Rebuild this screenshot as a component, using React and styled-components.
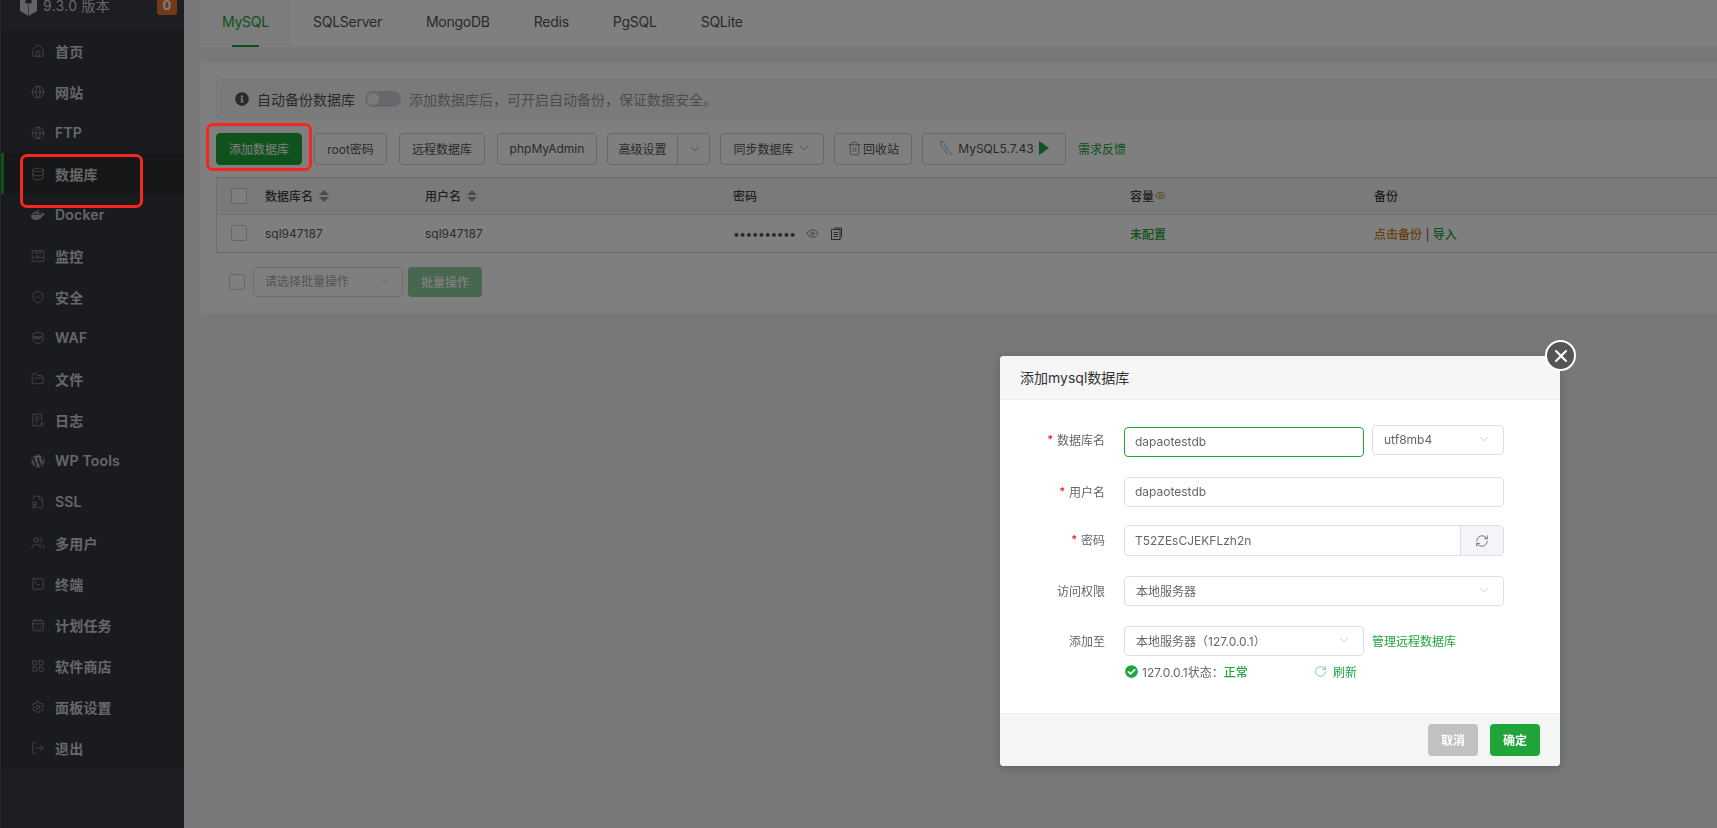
import React from 'react';
import styled, { createGlobalStyle } from 'styled-components';
import {
  Home, Globe, Database, ShieldCheck, FolderOpen, Users,
  SquareTerminal, CalendarDays, LayoutGrid, Settings, LogOut, ChevronDown, Trash2,
  Eye, RefreshCw, RotateCw, X, FileBadge,
} from 'lucide-react';
import { FaDocker, FaWordpress, FaCheckCircle, FaInfoCircle } from 'react-icons/fa';

const GREEN = '#20a53a';

const GlobalStyle = createGlobalStyle`
  html, body {
    margin: 0;
    height: 100%;
    overflow: hidden;
    font-family: Inter, "Noto Sans CJK SC", "Liberation Sans", sans-serif;
    font-size: 12px;
    color: #555;
    background: #f0f0f0;
  }
  * { box-sizing: border-box; }
`;

const Page = styled.div`
  display: flex;
  width: 100%;
  height: 828px;
  overflow: hidden;
`;

const Sidebar = styled.aside`
  width: 184px;
  flex-shrink: 0;
  background: #393c46;
  border-left: 1px solid #4b4e58;
  display: flex;
  flex-direction: column;
`;

const VersionRow = styled.div`
  height: 30px;
  display: flex;
  padding: 0 7px 0 19px;
  gap: 6px;
  color: #ccc;
  font-size: 14px;
  line-height: 12px;
`;

const Version = styled.span`
  flex: 1;
  letter-spacing: 0.3px;
`;

const Badge = styled.span`
  width: 20px;
  height: 15px;
  border-radius: 0 0 3px 3px;
  background: #e8722c;
  color: #fff;
  font-size: 13px;
  font-weight: 700;
  line-height: 11px;
  text-align: center;
`;

const Menu = styled.nav`
  background: #32373d;
`;

const NavItem = styled.a`
  height: 41px;
  display: flex;
  align-items: center;
  gap: 10px;
  padding-left: 30px;
  color: #cfcfcf;
  font-size: 14px;
  font-weight: 600;
  letter-spacing: 0.2px;
  background: ${props => (props.$active ? '#2a2e33' : 'transparent')};
  box-shadow: ${props => (props.$active ? `inset 3px 0 0 ${GREEN}` : 'none')};
  svg {
    width: 14px;
    height: 14px;
    flex-shrink: 0;
    color: #ababab;
    stroke-width: 1.1;
  }
`;

const Main = styled.main`
  flex: 1;
  min-width: 0;
  padding-left: 16px;
  display: flex;
  flex-direction: column;
  gap: 16px;
`;

const Tabs = styled.div`
  height: 47px;
  display: flex;
  background: #fff;
  border-bottom-left-radius: 4px;
`;

const Tab = styled.div`
  position: relative;
  height: 47px;
  padding: 0 22px 4px;
  display: flex;
  align-items: center;
  font-size: 14px;
  letter-spacing: -0.25px;
  color: ${props => (props.$active ? GREEN : '#555')};
  background: ${props => (props.$active ? '#f8f8f8' : 'transparent')};
  ${props => props.$active && `
    &::after {
      content: '';
      position: absolute;
      left: 32px;
      bottom: 0;
      width: 27px;
      height: 2px;
      background: ${GREEN};
    }
  `}
`;

const Card = styled.section`
  height: 250px;
  padding: 16px 0 0 16px;
  background: #fff;
  border-radius: 4px 0 0 4px;
`;

const Notice = styled.div`
  height: 41px;
  display: flex;
  align-items: center;
  padding: 0 0 1px 18px;
  background: #f5f5f5;
  border: 1px solid #eee;
  border-right: 0;
  border-radius: 4px 0 0 4px;
  font-size: 14px;
  color: #555;
  svg { color: #555; }
`;

const NoticeTitle = styled.span`
  margin-left: 8px;
`;

const Toggle = styled.span`
  position: relative;
  width: 36px;
  height: 16px;
  margin: 0 8px 0 10px;
  border-radius: 8px;
  background: #cfd1d6;
  &::after {
    content: '';
    position: absolute;
    left: 2px;
    top: 2px;
    width: 12px;
    height: 12px;
    border-radius: 50%;
    background: #f4f4f4;
  }
`;

const NoticeHint = styled.span`
  color: #999;
`;

const Toolbar = styled.div`
  display: flex;
  align-items: center;
  gap: 10px;
  margin: 13px 0 12px;
`;

const ToolGroup = styled.div`
  display: flex;
  gap: 12px;
`;

const Button = styled.button`
  width: ${props => props.$width}px;
  height: 32px;
  padding: 0 0 2px;
  display: inline-flex;
  align-items: center;
  justify-content: center;
  gap: ${props => props.$gap || 3}px;
  border: 1px solid ${props => (props.$primary ? GREEN : '#d0d0d0')};
  border-radius: 4px;
  background: ${props => (props.$primary ? GREEN : '#fff')};
  color: ${props => (props.$primary ? '#fff' : '#555')};
  font: inherit;
  font-size: 12px;
  svg { flex-shrink: 0; }
`;

const SplitButton = styled(Button)`
  padding: 0;
  justify-content: flex-start;
`;

const SplitLabel = styled.span`
  width: 73px;
  height: 100%;
  padding-bottom: 2px;
  display: flex;
  align-items: center;
  justify-content: center;
  border-right: 1px solid #d0d0d0;
`;

const SplitArrow = styled.span`
  width: 29px;
  display: flex;
  justify-content: center;
`;

const FeedbackLink = styled.a`
  margin-left: 2px;
  padding-bottom: 2px;
  color: ${GREEN};
  font-size: 12px;
`;

const Table = styled.div`
  border-top: 1px solid #ccc;
  border-left: 1px solid #ddd;
`;

const TableRow = styled.div`
  display: grid;
  grid-template-columns: 48px 160px 308px 397px 244px 1fr;
  align-items: center;
  height: ${props => (props.$head ? 37 : 38)}px;
  padding-bottom: 1px;
  border-bottom: 1px solid ${props => (props.$head ? '#e0e0e0' : '#ccc')};
  background: ${props => (props.$head ? '#f5f5f5' : '#fff')};
  font-weight: ${props => (props.$head ? 500 : 400)};
  color: ${props => (props.$head ? '#444' : '#555')};
`;

const CheckCell = styled.div`
  padding-left: 14px;
`;

const Checkbox = styled.span`
  display: block;
  width: 16px;
  height: 16px;
  border: 1px solid #ccc;
  border-radius: 2px;
  background: #fff;
`;

const HeadCell = styled.div`
  display: flex;
  align-items: center;
  gap: ${props => props.$gap ?? 6}px;
`;

const SortArrows = styled.span`
  display: inline-flex;
  flex-direction: column;
  gap: 2px;
  &::before, &::after {
    content: '';
    border-left: 5px solid transparent;
    border-right: 5px solid transparent;
  }
  &::before { border-bottom: 5px solid #999; }
  &::after { border-top: 5px solid #999; }
`;

const PasswordCell = styled.div`
  display: flex;
  align-items: center;
  color: #555;
  svg { color: #555; }
`;

const Dots = styled.span`
  width: 73px;
  font-size: 12px;
  letter-spacing: -0.5px;
`;

const CopyWrap = styled.span`
  display: flex;
  margin-left: 12px;
`;

const GreenText = styled.span`
  color: ${GREEN};
  font-weight: 500;
`;

const OrangeText = styled.span`
  color: #cb7e1f;
  font-weight: 500;
`;

const BatchRow = styled.div`
  display: flex;
  align-items: center;
  margin-top: 14px;
  padding-left: 13px;
`;

const BatchSelect = styled.div`
  width: 150px;
  height: 30px;
  margin-left: 8px;
  padding: 0 11px 3px;
  display: flex;
  align-items: center;
  justify-content: space-between;
  border: 1px solid #ddd;
  border-radius: 4px;
  color: #aaa;
`;

const BatchButton = styled.button`
  width: 74px;
  height: 30px;
  margin-left: 5px;
  padding-bottom: 3px;
  border: 0;
  border-radius: 4px;
  background: #8fd09d;
  color: #fff;
  font: inherit;
  font-weight: 500;
`;

const Overlay = styled.div`
  position: fixed;
  inset: 0;
  background: rgba(0, 0, 0, 0.5);
`;

const MenuMark = styled.div`
  position: fixed;
  left: 20px;
  top: 154px;
  width: 123px;
  height: 54px;
  border: 3px solid #f5271f;
  border-radius: 7px;
`;

const ButtonMark = styled.div`
  position: fixed;
  left: 206px;
  top: 123px;
  width: 106px;
  height: 48px;
  border: 3px solid #f5271f;
  border-radius: 7px;
`;

const Modal = styled.div`
  position: fixed;
  left: 1000px;
  top: 356px;
  width: 560px;
  height: 410px;
  display: flex;
  flex-direction: column;
  background: #fff;
  border-radius: 4px;
  box-shadow: 0 2px 10px rgba(0, 0, 0, 0.2);
`;

const CloseButton = styled.span`
  position: absolute;
  right: -16px;
  top: -16px;
  width: 31px;
  height: 31px;
  display: flex;
  align-items: center;
  justify-content: center;
  border: 2px solid #fff;
  border-radius: 50%;
  background: #555;
  color: #fff;
`;

const ModalHeader = styled.header`
  height: 44px;
  display: flex;
  align-items: center;
  padding: 0 0 2px 20px;
  background: #f6f6f6;
  border-bottom: 1px solid #eee;
  border-radius: 4px 4px 0 0;
  font-size: 14px;
  color: #333;
`;

const ModalBody = styled.div`
  flex: 1;
  padding-left: 124px;
`;

const FormRow = styled.div`
  position: relative;
  display: flex;
  gap: 8px;
  align-items: flex-start;
  margin-top: ${props => props.$top}px;
`;

const Label = styled.label`
  position: absolute;
  right: 100%;
  top: 0;
  margin-right: 19px;
  height: 30px;
  padding-bottom: 2px;
  display: flex;
  align-items: center;
  gap: 4px;
  white-space: nowrap;
  color: #666;
  &::before {
    content: ${props => (props.$required ? "'*'" : 'none')};
    color: #e00;
    font-size: 11px;
  }
`;

const Input = styled.div`
  width: ${props => props.$width}px;
  height: ${props => props.$height || 30}px;
  margin-top: ${props => props.$offset || 0}px;
  padding: 0 0 1px 10px;
  display: flex;
  align-items: center;
  border: 1px solid ${props => (props.$focus ? GREEN : '#dcdfe6')};
  border-radius: 4px;
  color: #666;
`;

const PasswordField = styled(Input)`
  padding: 0 0 0 10px;
  justify-content: space-between;
`;

const RefreshAddon = styled.span`
  width: 43px;
  height: 100%;
  display: flex;
  align-items: center;
  justify-content: center;
  background: #f4f5f8;
  border-left: 1px solid #dcdfe6;
  border-radius: 0 4px 4px 0;
  color: #555;
`;

const Select = styled(Input)`
  padding: 0 12px 2px 11px;
  justify-content: space-between;
  svg { color: #aaa; }
`;

const ManageLink = styled.a`
  height: 30px;
  padding-bottom: 2px;
  display: flex;
  align-items: center;
  color: ${GREEN};
`;

const StatusRow = styled.div`
  display: flex;
  align-items: center;
  height: 20px;
  margin-top: 5px;
  padding-left: 1px;
  color: #666;
  svg { color: ${GREEN}; }
`;

const StatusText = styled.span`
  margin-left: 4px;
  width: 172px;
`;

const RefreshLink = styled.span`
  margin-left: 6px;
  color: ${GREEN};
`;

const ModalFooter = styled.footer`
  height: 53px;
  display: flex;
  align-items: center;
  justify-content: flex-end;
  gap: 12px;
  padding-right: 20px;
  background: #f4f6f5;
  border-top: 1px solid #eceeed;
  border-radius: 0 0 4px 4px;
`;

const FooterButton = styled.button`
  width: 50px;
  height: 32px;
  padding-bottom: 2px;
  border: 0;
  border-radius: 4px;
  background: ${props => (props.$cancel ? '#c1c1c1' : GREEN)};
  color: #fff;
  font: inherit;
  font-weight: 700;
`;

const WafIcon = () => (
  <svg viewBox="0 0 24 24" fill="none" stroke="currentColor">
    <path d="M12 2 3 5v7c0 5 4 8.500 9 10 5-1.500 9-5 9-10V5z" />
    <text x="12" y="13" textAnchor="middle" fontSize="6" fill="currentColor" stroke="none">WAF</text>
  </svg>
);

const MonitorIcon = () => (
  <svg viewBox="0 0 24 24" fill="none" stroke="currentColor">
    <rect x="2" y="3" width="20" height="18" rx="1" />
    <path d="M7 3v4h10V3M3 15h5l2-4 2.500 6 2-4 1.500 2h5" />
  </svg>
);

const LogIcon = () => (
  <svg viewBox="0 0 24 24" fill="none" stroke="currentColor">
    <path d="M18 14V2H3v20h14M7 7h7M7 11h7M7 15h5" />
    <circle cx="19" cy="19" r="2.500" />
  </svg>
);

const LogoIcon = () => (
  <svg width="17" height="16" viewBox="0 0 17 16" fill="#c8c8c8">
    <path d="M0 0h5.500v3.500h6V0H17v11l-8.500 5L0 11z" />
    <path d="M8.200 5h.6v10.500h-.6z" fill="#393c46" />
  </svg>
);

const DolphinIcon = () => (
  <svg width="14" height="16" viewBox="0 0 14 16" fill="none" stroke="#7ba4c9" strokeWidth="0.9">
    <path d="M2 1c-1 3 0 5 2 7s3 4 4 6" />
    <path d="M2 1c3 1 4 3 5 6s3 4 5 7" />
    <path d="M12 14l1 1" />
  </svg>
);

const PlayIcon = () => (
  <svg width="10" height="14" viewBox="0 0 10 14" fill={GREEN}>
    <path d="M0 0l10 7-10 7z" />
  </svg>
);

const CopyIcon = () => (
  <svg width="11" height="13" viewBox="0 0 11 13" fill="none" stroke="currentColor" strokeWidth="1">
    <path d="M3 1h7.500v9.500" />
    <rect x="0.500" y="2.500" width="8.500" height="10" />
    <path d="M2.500 5.500h4.500M2.500 7.500h4.500M2.500 9.500h4.500" />
  </svg>
);

const NAV_ITEMS = [
  { label: '首页', icon: <Home /> },
  { label: '网站', icon: <Globe /> },
  { label: 'FTP', icon: <Globe /> },
  { label: '数据库', icon: <Database />, active: true },
  { label: 'Docker', icon: <FaDocker /> },
  { label: '监控', icon: <MonitorIcon /> },
  { label: '安全', icon: <ShieldCheck /> },
  { label: 'WAF', icon: <WafIcon /> },
  { label: '文件', icon: <FolderOpen /> },
  { label: '日志', icon: <LogIcon /> },
  { label: 'WP Tools', icon: <FaWordpress /> },
  { label: 'SSL', icon: <FileBadge /> },
  { label: '多用户', icon: <Users /> },
  { label: '终端', icon: <SquareTerminal /> },
  { label: '计划任务', icon: <CalendarDays /> },
  { label: '软件商店', icon: <LayoutGrid /> },
  { label: '面板设置', icon: <Settings /> },
  { label: '退出', icon: <LogOut /> },
];

const TABS = ['MySQL', 'SQLServer', 'MongoDB', 'Redis', 'PgSQL', 'SQLite'];

export default function App() {
  return (
    <>
      <GlobalStyle />
      <Page>
        <Sidebar>
          <VersionRow>
            <LogoIcon />
            <Version>9.3.0 版本</Version>
            <Badge>0</Badge>
          </VersionRow>
          <Menu>
            {NAV_ITEMS.map(item => (
              <NavItem key={item.label} $active={item.active}>
                {item.icon}
                {item.label}
              </NavItem>
            ))}
          </Menu>
        </Sidebar>
        <Main>
          <Tabs>
            {TABS.map((name, i) => (
              <Tab key={name} $active={i === 0}>{name}</Tab>
            ))}
          </Tabs>
          <Card>
            <Notice>
              <FaInfoCircle size={14} />
              <NoticeTitle>自动备份数据库</NoticeTitle>
              <Toggle />
              <NoticeHint>添加数据库后，可开启自动备份，保证数据安全。</NoticeHint>
            </Notice>
            <Toolbar>
              <ToolGroup>
                <Button $primary $width={86}>添加数据库</Button>
                <Button $width={73}>root密码</Button>
                <Button $width={86}>远程数据库</Button>
                <Button $width={100}>phpMyAdmin</Button>
              </ToolGroup>
              <SplitButton $width={103} $gap={0}>
                <SplitLabel>高级设置</SplitLabel>
                <SplitArrow><ChevronDown size={14} strokeWidth={1} /></SplitArrow>
              </SplitButton>
              <Button $width={104}>同步数据库<ChevronDown size={14} strokeWidth={1} /></Button>
              <Button $width={78} $gap={1}><Trash2 size={15} strokeWidth={1} />回收站</Button>
              <Button $width={144} $gap={5}>
                <DolphinIcon />
                MySQL5.7.43
                <PlayIcon />
              </Button>
              <FeedbackLink>需求反馈</FeedbackLink>
            </Toolbar>
            <Table>
              <TableRow $head>
                <CheckCell><Checkbox /></CheckCell>
                <HeadCell>数据库名<SortArrows /></HeadCell>
                <HeadCell>用户名<SortArrows /></HeadCell>
                <HeadCell>密码</HeadCell>
                <HeadCell $gap={1}>容量<Eye size={11} color="#b08a3c" /></HeadCell>
                <HeadCell>备份</HeadCell>
              </TableRow>
              <TableRow>
                <CheckCell><Checkbox /></CheckCell>
                <div>sql947187</div>
                <div>sql947187</div>
                <PasswordCell>
                  <Dots>••••••••••</Dots>
                  <Eye size={13} strokeWidth={1.2} />
                  <CopyWrap><CopyIcon /></CopyWrap>
                </PasswordCell>
                <GreenText>未配置</GreenText>
                <div><OrangeText>点击备份</OrangeText> | <GreenText>导入</GreenText></div>
              </TableRow>
            </Table>
            <BatchRow>
              <Checkbox />
              <BatchSelect>
                请选择批量操作
                <ChevronDown size={13} strokeWidth={1} />
              </BatchSelect>
              <BatchButton>批量操作</BatchButton>
            </BatchRow>
          </Card>
        </Main>
        <Overlay />
        <MenuMark />
        <ButtonMark />
        <Modal>
          <CloseButton><X size={20} strokeWidth={2.5} /></CloseButton>
          <ModalHeader>添加mysql数据库</ModalHeader>
          <ModalBody>
            <FormRow $top={25}>
              <Label $required>数据库名</Label>
              <Input $width={240} $offset={2} $focus>dapaotestdb</Input>
              <Select $width={132}>utf8mb4<ChevronDown size={14} strokeWidth={1} /></Select>
            </FormRow>
            <FormRow $top={20}>
              <Label $required>用户名</Label>
              <Input $width={380}>dapaotestdb</Input>
            </FormRow>
            <FormRow $top={18}>
              <Label $required>密码</Label>
              <PasswordField $width={380} $height={31}>
                T52ZEsCJEKFLzh2n
                <RefreshAddon><RefreshCw size={14} strokeWidth={1.3} /></RefreshAddon>
              </PasswordField>
            </FormRow>
            <FormRow $top={20}>
              <Label>访问权限</Label>
              <Select $width={380}>本地服务器<ChevronDown size={14} strokeWidth={1} /></Select>
            </FormRow>
            <FormRow $top={20}>
              <Label>添加至</Label>
              <Select $width={240}>本地服务器（127.0.0.1）<ChevronDown size={14} strokeWidth={1} /></Select>
              <ManageLink>管理远程数据库</ManageLink>
            </FormRow>
            <StatusRow>
              <FaCheckCircle size={13} />
              <StatusText>127.0.0.1状态：<GreenText as="span">正常</GreenText></StatusText>
              <RotateCw size={13} strokeWidth={1} />
              <RefreshLink>刷新</RefreshLink>
            </StatusRow>
          </ModalBody>
          <ModalFooter>
            <FooterButton $cancel>取消</FooterButton>
            <FooterButton>确定</FooterButton>
          </ModalFooter>
        </Modal>
      </Page>
    </>
  );
}
